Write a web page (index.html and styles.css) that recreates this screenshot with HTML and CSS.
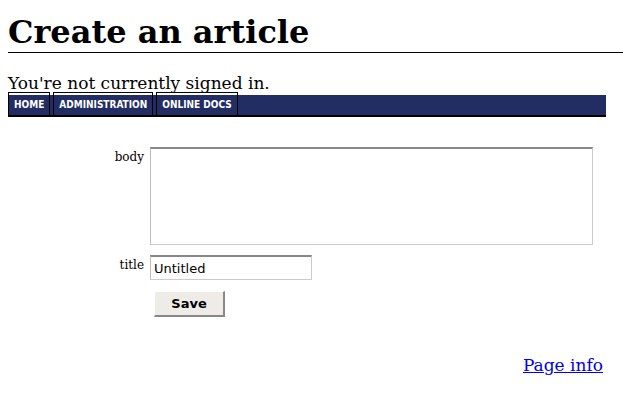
FILE: index.html
```html
<!DOCTYPE html>
<html>
<head>
<meta charset="utf-8">
<title>Create an article</title>
<link rel="stylesheet" href="styles.css">
</head>
<body>
<h1 class="title">Create an article</h1>
<div class="signin">You're not currently signed in.</div>
<nav class="navbar">
  <a class="navitem" href="#">HOME</a>
  <a class="navitem" href="#">ADMINISTRATION</a>
  <a class="navitem" href="#">ONLINE DOCS</a>
</nav>
<form class="form">
  <div class="row">
    <label class="label">body</label>
    <textarea class="body-input"></textarea>
  </div>
  <div class="row row-title">
    <label class="label">title</label>
    <input class="title-input" type="text" value="Untitled">
  </div>
  <div class="row row-save">
    <span class="label"></span>
    <button class="save" type="button">Save</button>
  </div>
</form>
<div class="footer"><a href="#" class="pageinfo">Page info</a></div>
</body>
</html>
```
FILE: styles.css
```css
html, body { margin: 0; padding: 0; background: #fff; }
body {
  padding: 8px 0 0 8px;
  font-family: "DejaVu Serif", serif;
  font-size: 17px;
  color: #000;
}
.title {
  margin: 4px 0 0 0;
  font-size: 32px;
  line-height: 40px;
  font-weight: bold;
  border-bottom: 1px solid #000;
  padding-bottom: 0;
}
.signin {
  margin-top: 22px;
  line-height: 17px;
  height: 17px;
}
.navbar {
  display: flex;
  align-items: flex-end;
  width: 598px;
  height: 23px;
  background: linear-gradient(to bottom, transparent 3px, #222d63 3px);
  border-bottom: 2px solid #000;
  gap: 3px;
}
.navitem {
  display: block;
  font-family: "DejaVu Sans Condensed", "DejaVu Sans", sans-serif;
  font-stretch: condensed;
  font-weight: bold;
  font-size: 10px;
  color: #fff;
  text-decoration: none;
  border: 1px solid #000;
  padding: 0 5px;
  line-height: 23px;
  height: 23px;
  margin-bottom: -2px;
}
.form { margin-top: 30px; }
.row { display: flex; align-items: flex-start; }
.label {
  width: 136px;
  text-align: right;
  font-size: 12px;
  padding-right: 6px;
  padding-top: 3px;
}
.body-input {
  width: 443px;
  height: 98px;
  box-sizing: border-box;
  border: 1px solid #ccc;
  border-top: 2px solid #888;
  border-left-color: #bbb;
  margin: 0;
  resize: none;
}
.row-title { margin-top: 10px; }
.title-input {
  width: 162px;
  height: 25px;
  box-sizing: border-box;
  border: 1px solid #ccc;
  border-top: 2px solid #888;
  border-left-color: #bbb;
  margin: 0;
  font-family: "DejaVu Sans", sans-serif;
  font-size: 13px;
  padding: 0 3px;
  color: #000;
}
.row-save { margin-top: 11px; }
.save {
  margin-left: 4px;
  width: 71px;
  height: 26px;
  background: #efebe7;
  border: 1px solid #fff;
  border-right: 2px solid #888;
  border-bottom: 2px solid #888;
  font-family: "DejaVu Sans", sans-serif;
  font-weight: bold;
  font-size: 13px;
  color: #000;
}
.footer {
  width: 595px;
  text-align: right;
  margin-top: 39px;
  line-height: 19px;
}
.pageinfo { color: #00e; }
```
